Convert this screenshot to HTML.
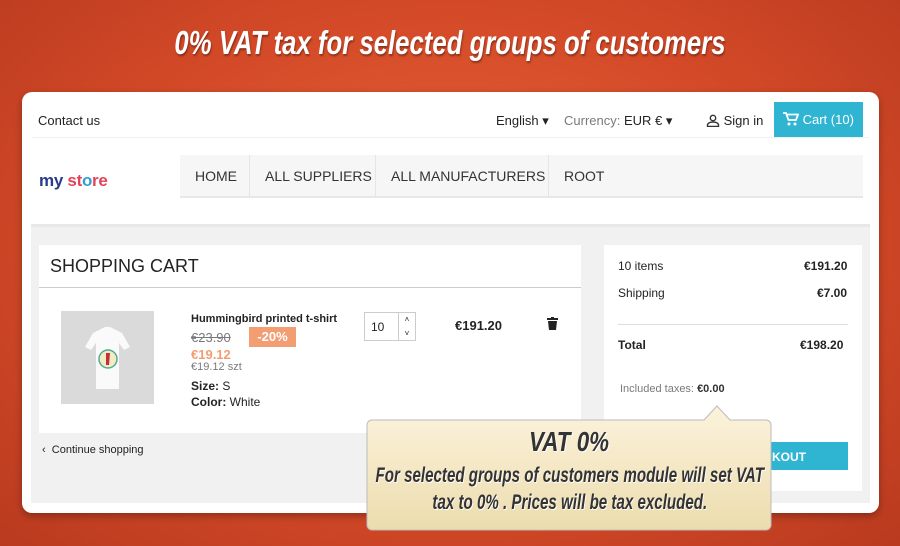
<!DOCTYPE html><html><head><meta charset="utf-8"><style>
*{margin:0;padding:0;box-sizing:border-box}
body{width:900px;height:546px;overflow:hidden;position:relative;font-family:"Liberation Sans",sans-serif;background:radial-gradient(ellipse at 50% 45%,#e8643a 0%,#d44a28 55%,#b93a1f 100%);color:#232323}
.title{position:absolute;top:24px;left:0;width:900px;text-align:center;color:#fff;font-weight:bold;font-style:italic;font-size:33px;transform:scaleX(.78);text-shadow:1px 2px 2px rgba(0,0,0,.35)}
.card{position:absolute;left:22px;top:92px;width:857px;height:421px;background:#fff;border-radius:10px;box-shadow:0 3px 8px rgba(0,0,0,.3)}
.a{position:absolute;white-space:nowrap}
.ln{position:absolute;left:367px;width:405px;display:flex;justify-content:center;white-space:nowrap}
.cond{font-weight:bold;font-style:italic;display:inline-block;color:#333;text-shadow:1px 1px 0 #fff;flex:none}
</style></head><body>
<div class="title">0% VAT tax for selected groups of customers</div>
<div class="card">
<div class="a" style="left:16px;top:21px;font-size:13px">Contact us</div>
<div class="a" style="left:474px;top:21px;font-size:13px">English ▾</div>
<div class="a" style="left:542px;top:21px;font-size:13px;color:#7a7a7a">Currency: <span style="color:#232323">EUR € ▾</span></div>
<div class="a" style="left:684px;top:21px;font-size:13px"><svg width="14" height="13" viewBox="0 0 14 13" style="vertical-align:-2px"><circle cx="7" cy="4" r="2.7" fill="none" stroke="#333" stroke-width="1.4"/><path d="M1.5 12.5v-1.5c0-2 3-3 5.5-3s5.5 1 5.5 3v1.5z" fill="none" stroke="#333" stroke-width="1.4"/></svg> Sign in</div>
<div class="a" style="left:752px;top:10px;width:89px;height:35px;background:#2fb5d2;color:#fff;font-size:13px;padding:10px 0 0 9px"><svg width="16" height="14" viewBox="0 0 16 14" style="vertical-align:-2px"><path d="M0 1h3l2.5 7h7.5l2-5.5H4.5" fill="none" stroke="#fff" stroke-width="1.8"/><circle cx="6" cy="12" r="1.5" fill="#fff"/><circle cx="12" cy="12" r="1.5" fill="#fff"/></svg> Cart (10)</div>
<div class="a" style="left:10px;top:45px;width:837px;height:1px;background:#f0f0f0"></div>
<div class="a" style="left:17px;top:79px;font-size:17px;font-weight:bold;letter-spacing:-.3px"><span style="color:#2a3a8a">my</span> <span style="color:#e2435a">st</span><span style="color:#2fa0d2">o</span><span style="color:#e2435a">re</span></div>
<div class="a" style="left:158px;top:63px;width:683px;height:43px;background:#f6f6f6;border-bottom:2px solid #e8e8e8;font-size:14px;color:#333">
<span class="a" style="left:0;top:0;width:70px;height:41px;border-right:1px solid #e5e5e5;padding:13px 0 0 15px">HOME</span>
<span class="a" style="left:70px;top:0;width:126px;height:41px;border-right:1px solid #e5e5e5;padding:13px 0 0 15px">ALL SUPPLIERS</span>
<span class="a" style="left:196px;top:0;width:173px;height:41px;border-right:1px solid #e5e5e5;padding:13px 0 0 15px">ALL MANUFACTURERS</span>
<span class="a" style="left:384px;top:13px">ROOT</span></div>
<div class="a" style="left:9px;top:132px;width:839px;height:279px;background:#f1f1f1;border-top:3px solid #e8e8e8"></div>
<div class="a" style="left:17px;top:153px;width:542px;height:188px;background:#fff"></div>
<div class="a" style="left:28px;top:164px;font-size:18px">SHOPPING CART</div>
<div class="a" style="left:17px;top:195px;width:542px;height:1px;background:#ccc"></div>
<div class="a" style="left:39px;top:219px;width:93px;height:93px;background:#dadada"><svg width="93" height="93"><path d="M32 22l12-6h5l12 6 8 14-6 3-5-7v46H35V32l-5 7-6-3z" fill="#fafafa"/><circle cx="47" cy="48" r="9" fill="#f3ecc0" stroke="#5a9" stroke-width="1.5"/><path d="M45 42l4 0-1 12-3 0z" fill="#c03040"/></svg></div>
<div class="a" style="left:169px;top:221px;font-size:11px;font-weight:bold">Hummingbird printed t-shirt</div>
<div class="a" style="left:169px;top:238px;font-size:13px;color:#7a7a7a;text-decoration:line-through">€23.90</div>
<div class="a" style="left:227px;top:235px;width:47px;height:20px;background:#f39d72;color:#fff;font-size:13px;font-weight:bold;text-align:center;padding-top:2px">-20%</div>
<div class="a" style="left:169px;top:255px;font-size:13px;color:#f39d72;font-weight:bold">€19.12</div>
<div class="a" style="left:169px;top:269px;font-size:11px;color:#7a7a7a">€19.12 szt</div>
<div class="a" style="left:169px;top:287px;font-size:12px"><b>Size:</b> S</div>
<div class="a" style="left:169px;top:303px;font-size:12px"><b>Color:</b> White</div>
<div class="a" style="left:342px;top:220px;width:52px;height:29px;border:1px solid #ccc;font-size:12px;padding:7px 0 0 6px">10</div>
<div class="a" style="left:376px;top:220px;width:18px;height:29px;border:1px solid #ccc;font-size:8px;text-align:center;line-height:14px">˄<br>˅</div>
<div class="a" style="left:433px;top:226px;font-size:13px;font-weight:bold">€191.20</div>
<div class="a" style="left:525px;top:225px;width:10px;height:13px"><svg width="11" height="13"><rect x="0" y="1" width="11" height="2" fill="#222"/><rect x="4" y="0" width="3" height="2" fill="#222"/><path d="M1 4h9l-1 9H2z" fill="#222"/></svg></div>
<div class="a" style="left:20px;top:352px;font-size:11px">‹&nbsp; Continue shopping</div>
<div class="a" style="left:582px;top:153px;width:258px;height:246px;background:#fff"></div>
<div class="a" style="left:596px;top:167px;font-size:12px">10 items</div><div class="a" style="left:782px;top:167px;font-size:12px;font-weight:bold">€191.20</div>
<div class="a" style="left:596px;top:194px;font-size:12px">Shipping</div><div class="a" style="left:795px;top:194px;font-size:12px;font-weight:bold">€7.00</div>
<div class="a" style="left:596px;top:232px;width:230px;height:1px;background:#ddd"></div>
<div class="a" style="left:596px;top:246px;font-size:12px;font-weight:bold">Total</div><div class="a" style="left:778px;top:246px;font-size:12px;font-weight:bold">€198.20</div>
<div class="a" style="left:598px;top:291px;font-size:11px;color:#7a7a7a">Included taxes: <b style="color:#333">€0.00</b></div>
<div class="a" style="left:598px;top:350px;width:228px;height:28px;background:#2fb5d2;color:#fff;font-size:12px;font-weight:bold;padding:8px 0 0 152px">KOUT</div>
</div>
<svg class="a" style="left:366px;top:404px" width="410" height="128"><defs><linearGradient id="g" x1="0" y1="0" x2="0" y2="1"><stop offset="0" stop-color="#fcf3dc"/><stop offset="1" stop-color="#ecdcae"/></linearGradient></defs><path d="M6 16H338L351 2 364 16H400a5 5 0 0 1 5 5V121a5 5 0 0 1-5 5H6a5 5 0 0 1-5-5V21a5 5 0 0 1 5-5z" fill="url(#g)" stroke="#bbb" stroke-width="1"/></svg>
<div class="ln" style="top:427px;font-size:28px;line-height:30px"><span class="cond" style="transform:scaleX(.8)">VAT 0%</span></div>
<div class="ln" style="top:462px;font-size:21px;line-height:27px"><span class="cond" style="transform:scaleX(.72)">For selected groups of customers module will set VAT</span></div>
<div class="ln" style="top:489px;font-size:21px;line-height:27px"><span class="cond" style="transform:scaleX(.72)">tax to 0% . Prices will be tax excluded.</span></div>
</body></html>
